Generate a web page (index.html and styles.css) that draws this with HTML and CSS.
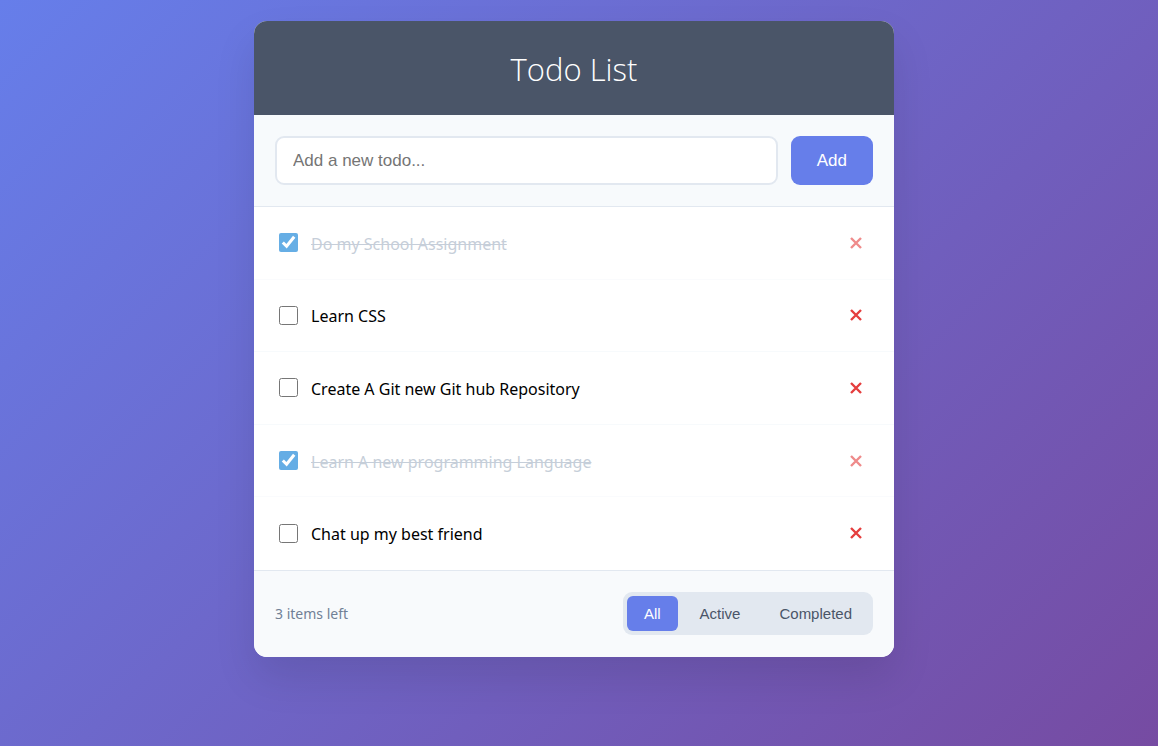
FILE: index.html
```html
<!DOCTYPE html>
<html lang="en">
<head>
  <meta charset="UTF-8">
  <meta name="viewport" content="width=device-width, initial-scale=1">
  <title>Todo List</title>
  <link rel="stylesheet" href="styles.css">
</head>
<body>
  <main class="card">
    <header class="card-header">
      <h1 class="title">Todo List</h1>
    </header>
    <form class="add-form">
      <input class="add-input" type="text" placeholder="Add a new todo..." aria-label="New todo">
      <button class="add-button" type="button">Add</button>
    </form>
    <ul class="todo-list">
      <li class="todo completed">
        <input class="todo-check" type="checkbox" id="todo-1" checked>
        <label class="todo-text" for="todo-1">Do my School Assignment</label>
        <button class="delete" type="button" aria-label="Delete"><svg class="cross" viewBox="0 0 12 12" aria-hidden="true"><path d="M1 1 11 11M11 1 1 11"/></svg></button>
      </li>
      <li class="todo">
        <input class="todo-check" type="checkbox" id="todo-2">
        <label class="todo-text" for="todo-2">Learn CSS</label>
        <button class="delete" type="button" aria-label="Delete"><svg class="cross" viewBox="0 0 12 12" aria-hidden="true"><path d="M1 1 11 11M11 1 1 11"/></svg></button>
      </li>
      <li class="todo">
        <input class="todo-check" type="checkbox" id="todo-3">
        <label class="todo-text" for="todo-3">Create A Git new Git hub Repository</label>
        <button class="delete" type="button" aria-label="Delete"><svg class="cross" viewBox="0 0 12 12" aria-hidden="true"><path d="M1 1 11 11M11 1 1 11"/></svg></button>
      </li>
      <li class="todo completed">
        <input class="todo-check" type="checkbox" id="todo-4" checked>
        <label class="todo-text" for="todo-4">Learn A new programming Language</label>
        <button class="delete" type="button" aria-label="Delete"><svg class="cross" viewBox="0 0 12 12" aria-hidden="true"><path d="M1 1 11 11M11 1 1 11"/></svg></button>
      </li>
      <li class="todo">
        <input class="todo-check" type="checkbox" id="todo-5">
        <label class="todo-text" for="todo-5">Chat up my best friend</label>
        <button class="delete" type="button" aria-label="Delete"><svg class="cross" viewBox="0 0 12 12" aria-hidden="true"><path d="M1 1 11 11M11 1 1 11"/></svg></button>
      </li>
    </ul>
    <footer class="card-footer">
      <span class="count">3 items left</span>
      <div class="filters">
        <button class="filter active" type="button">All</button>
        <button class="filter" type="button">Active</button>
        <button class="filter" type="button">Completed</button>
      </div>
    </footer>
  </main>
</body>
</html>
```

FILE: styles.css
```css
* {
  box-sizing: border-box;
  margin: 0;
  padding: 0;
}

body {
  min-height: 100vh;
  padding: 21px 30px 21px 20px;
  font-family: "Noto Sans", "Open Sans", sans-serif;
  background: linear-gradient(135deg, #667eea 0%, #764ba2 100%);
}

.card {
  max-width: 640px;
  margin: 0 auto;
  overflow: hidden;
  background: #fff;
  border-radius: 13px;
  box-shadow: 0 21px 42px rgba(0, 0, 0, 0.1);
}

.card-header {
  padding: 24px 24px 22px;
  text-align: center;
  color: #fff;
  background: #4a5568;
}

.title {
  font-family: "Open Sans", sans-serif;
  font-size: 31px;
  font-weight: 300;
  line-height: 48px;
}

.add-form {
  display: flex;
  gap: 13px;
  padding: 21px;
  background: #f7fafc;
  border-bottom: 1px solid #e2e8f0;
}

.add-input,
.add-button {
  height: 49px;
  font-family: "Liberation Sans", Arial, sans-serif;
  font-size: 17px;
  border-radius: 9px;
}

.add-input {
  flex: 1;
  min-width: 0;
  padding: 0 16px;
  background: #fff;
  border: 2px solid #e2e8f0;
}

.add-input::placeholder {
  color: #757575;
}

.add-button {
  padding: 0 26px;
  color: #fff;
  background: #667eea;
  border: 0;
}

.todo-list {
  display: grid;
  grid-auto-rows: 1fr;
  min-height: 363px;
  list-style: none;
}

.todo {
  display: flex;
  align-items: center;
  gap: 13px;
  padding: 0 21px 0 25px;
  border-bottom: 1px solid #f7fafc;
}

.todo:last-child {
  border-bottom-color: transparent;
}

.todo-check {
  width: 19px;
  height: 19px;
  accent-color: #0078d4;
}

.todo-text {
  flex: 1;
  padding-top: 2px;
  font-size: 16px;
  line-height: 24px;
}

.completed {
  opacity: 0.6;
}

.completed .todo-text {
  color: #a0aec0;
  text-decoration: line-through;
}

.delete {
  display: grid;
  place-items: center;
  width: 34px;
  height: 34px;
  background: none;
  border: 0;
}

.cross {
  width: 12px;
  height: 12px;
  fill: none;
  stroke: #e53e3e;
  stroke-width: 2.4;
}

.card-footer {
  display: flex;
  align-items: center;
  justify-content: space-between;
  padding: 21px 21px 22px;
  background: #f8fafc;
  border-top: 1px solid #e2e8f0;
}

.count {
  font-size: 14px;
  color: #718096;
}

.filters {
  display: flex;
  gap: 5px;
  padding: 4px;
  background: #e2e8f0;
  border-radius: 9px;
}

.filter {
  height: 35px;
  padding: 0 17px;
  font-family: "Liberation Sans", Arial, sans-serif;
  font-size: 15px;
  color: #4a5568;
  background: none;
  border: 0;
  border-radius: 6px;
}

.filter.active {
  color: #fff;
  background: #667eea;
}
```
